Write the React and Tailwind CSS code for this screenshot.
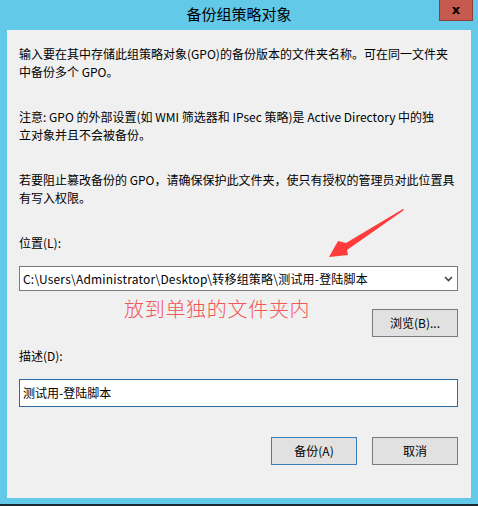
import React from 'react';

// Windows-style dialog: backup GPO
const font = "font-['Noto_Sans_CJK_SC','Noto_Sans',sans-serif]";

const Button = ({ children, primary = false }) => (
  <button
    className={`w-[86px] h-[28px] bg-[#e1e1e1] text-[12px] text-black flex items-center justify-center border ${
      primary ? 'border-[#3a7ebd]' : 'border-[#7a7a7a]'
    }`}
  >
    {children}
  </button>
);

const Arrow = () => (
  <svg
    className="absolute left-[326px] top-[206px]"
    width="80"
    height="56"
    viewBox="0 0 80 56"
  >
    <polygon
      points="77,3 20,37 12,35 3,51 22,49 21,44 78,4"
      fill="#ff3b3b"
    />
  </svg>
);

export default function App() {
  return (
    <div className={`w-[478px] h-[506px] bg-[#63c9e9] relative overflow-hidden flex flex-col ${font}`}>
      {/* Title bar */}
      <div className="h-[30px] shrink-0 relative flex items-center justify-center">
        <span className="text-[15px] text-black -mt-[1px]">备份组策略对象</span>
        <div className="absolute right-[5px] top-0 w-[34px] h-[21px] bg-[#c75a50] border border-t-0 border-[#8e3e36] flex items-center justify-center">
          <span className="text-[13px] font-bold leading-none text-black -mt-[2px] font-['DejaVu_Sans',sans-serif]">x</span>
        </div>
      </div>

      {/* Content panel */}
      <div className="mx-[7px] h-[468px] shrink-0 bg-[#f0f0f0] pl-[12px] pr-[13px] pt-[15px] text-[12px] leading-[18px] text-black">
        <p className="mb-[27px]">
          输入要在其中存储此组策略对象(GPO)的备份版本的文件夹名称。可在同一文件夹
          <br />
          中备份多个 GPO。
        </p>
        <p className="mb-[27px]">
          注意: GPO 的外部设置(如 WMI 筛选器和 IPsec 策略)是 Active Directory 中的独
          <br />
          立对象并且不会被备份。
        </p>
        <p className="mb-[27px]">
          若要阻止篡改备份的 GPO，请确保保护此文件夹，使只有授权的管理员对此位置具
          <br />
          有写入权限。
        </p>

        <div className="h-[18px]">位置(L):</div>
        <div className="mt-[14px] h-[25px] bg-white border border-[#7a7a7a] flex items-center justify-between pl-[3px] pr-[4px]">
          <span className="tracking-[0.2px]">C:\Users\Administrator\Desktop\转移组策略\测试用-登陆脚本</span>
          <svg width="9" height="6" viewBox="0 0 9 6">
            <path d="M1 1 L4.5 4.5 L8 1" stroke="#444" strokeWidth="1.6" fill="none" />
          </svg>
        </div>
        <div className="mt-[18px] flex justify-end">
          <Button>浏览(B)...</Button>
        </div>

        <div className="mt-[10px] h-[18px]">描述(D):</div>
        <div className="mt-[14px] h-[28px] bg-white border border-[#2e6a9e] flex items-center pl-[3px]">
          测试用-登陆脚本
        </div>

        <div className="mt-[30px] flex justify-end gap-[15px]">
          <Button primary>备份(A)</Button>
          <Button>取消</Button>
        </div>
      </div>

      <div className="h-[6px] shrink-0" />
      <div className="flex-1 bg-[#1b2a30]" />

      {/* Annotation */}
      <Arrow />
      <div className="absolute left-[124px] top-[296px] text-[20px] leading-[26px] tracking-[0.7px] text-[#f25656] font-light">
        放到单独的文件夹内
      </div>
    </div>
  );
}
